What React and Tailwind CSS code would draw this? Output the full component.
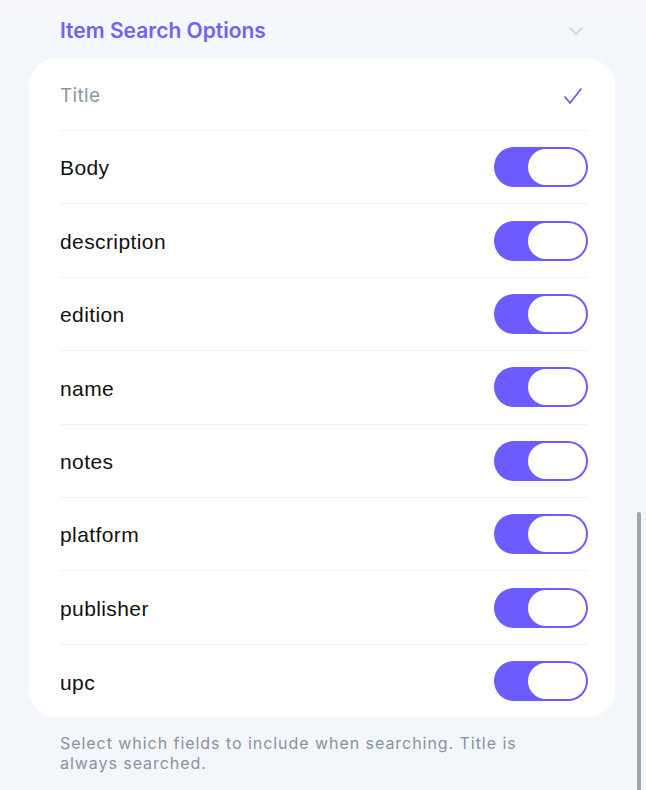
const FIELDS = ['Body', 'description', 'edition', 'name', 'notes', 'platform', 'publisher', 'upc']

function Toggle() {
  return (
    <div className="flex h-[40px] w-[94px] items-center justify-end rounded-full bg-[#6c5cff] p-[2px]">
      <div className="h-[36px] w-[58px] rounded-full bg-white" />
    </div>
  )
}

export default function App() {
  return (
    <div
      className="relative h-[790px] w-[646px] overflow-hidden bg-[#f3f6fb]"
      style={{ fontFamily: 'Inter, "Noto Sans", sans-serif' }}
    >
      <div className="flex h-[58px] items-center justify-between bg-gradient-to-b from-[#f6f8fc] to-[#f3f6fb] pl-[60px] pr-[62px] pt-[3px]">
        <h2 className="text-[21px] font-semibold text-[#7360f6]">Item Search Options</h2>
        <svg width="16" height="10" viewBox="0 0 16 10" fill="none" stroke="#c4c9d2" strokeWidth="1.4" strokeLinecap="round" strokeLinejoin="round">
          <path d="M2 2l6 6 6-6" />
        </svg>
      </div>

      <div className="ml-[29px] w-[586px] rounded-[28px] bg-white pl-[31px] pr-[27px]">
        <div className="flex h-[73px] items-center justify-between border-b border-[#eceff3] pt-[4px]">
          <span className="text-[19px] tracking-[0.3px] text-[#8b9aa2]">Title</span>
          <svg width="20" height="18" viewBox="0 0 20 18" fill="none" stroke="#6c5cff" strokeWidth="1.8" strokeLinecap="round" strokeLinejoin="round" className="mr-[5px]">
            <path d="M2 10l5 6L18 2" />
          </svg>
        </div>
        {FIELDS.map((f, i) => (
          <div
            key={f}
            className={`flex h-[73.4px] items-center justify-between ${i < FIELDS.length - 1 ? 'border-b border-[#eceff3]' : ''}`}
          >
            <span className="pt-[2px] text-[21px] tracking-[0.4px] text-[#111]" style={{ fontFamily: '"Liberation Sans", Arial, sans-serif' }}>{f}</span>
            <Toggle />
          </div>
        ))}
      </div>

      <p className="mt-[15px] w-[540px] pl-[60px] text-[16px] leading-[20px] tracking-[0.95px] text-[#8793a0]">
        Select which fields to include when searching. Title is always searched.
      </p>

      <div className="absolute right-[5px] top-[512px] h-[280px] w-[4px] rounded-full bg-[#9aa6ac]" />
    </div>
  )
}
